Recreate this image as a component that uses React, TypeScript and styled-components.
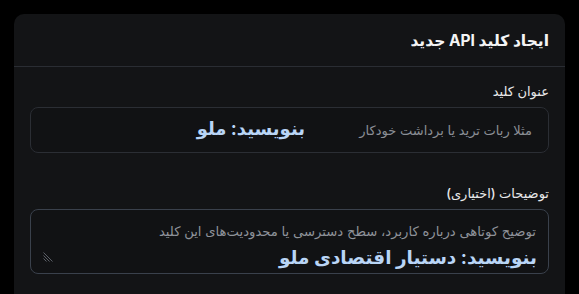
import styled, { createGlobalStyle } from 'styled-components';

const GlobalStyle = createGlobalStyle`
  html, body {
    margin: 0;
    padding: 0;
    background: #000;
    height: 100%;
    overflow: hidden;
  }
  body {
    font-family: Inter, "DejaVu Sans", sans-serif;
  }
`;

const Page = styled.div`
  padding: 14px 14px 0;
  direction: rtl;
`;

const Card = styled.div`
  background: #131416;
  border-radius: 10px;
  height: 290px;
  overflow: hidden;
`;

const Header = styled.div`
  height: 52px;
  display: flex;
  align-items: center;
  padding: 0 16px;
  border-bottom: 1px solid #2a2d33;
`;

const Title = styled.h2`
  margin: 0;
  font-size: 15.5px;
  font-weight: 700;
  color: #f4f4f5;
`;

const Body = styled.div`
  padding: 16px;
  display: flex;
  flex-direction: column;
  gap: 32px;
`;

const Field = styled.div`
  display: flex;
  flex-direction: column;
  gap: 8px;
`;

const Label = styled.label`
  font-size: 13px;
  font-weight: 500;
  color: #e9e9ea;
  line-height: 16px;
`;

const Wrap = styled.div`
  position: relative;
`;

const Input = styled.input`
  box-sizing: border-box;
  width: 100%;
  height: 46px;
  padding: 0 16px;
  background: #111214;
  border: 1px solid #2b2e34;
  border-radius: 8px;
  color: #e9e9ea;
  font: inherit;
  font-size: 13px;
  direction: rtl;
  outline: none;
  &::placeholder {
    color: #8b8f96;
  }
`;

const TextArea = styled.textarea`
  box-sizing: border-box;
  display: block;
  width: 100%;
  height: 65px;
  padding: 11px 12px;
  background: #111214;
  border: 1px solid #3a414c;
  border-radius: 8px;
  color: #e9e9ea;
  font: inherit;
  font-size: 13.2px;
  line-height: 20px;
  direction: rtl;
  outline: none;
  resize: none;
  &::placeholder {
    color: #8f939a;
  }
`;

const Hint = styled.span<{ $size: number; $right: number; $top: number }>`
  position: absolute;
  right: ${(p) => p.$right}px;
  top: ${(p) => p.$top}px;
  font-size: ${(p) => p.$size}px;
  font-weight: 700;
  color: #b9d5f6;
  line-height: 1.2;
  white-space: nowrap;
  pointer-events: none;
`;

const Grip = styled.svg`
  position: absolute;
  left: 13px;
  bottom: 12px;
  width: 10px;
  height: 10px;
`;

function ResizeGrip() {
  return (
    <Grip viewBox="0 0 10 10">
      <g stroke="#5a5e66" strokeWidth="1">
        <line x1="0.5" y1="0.5" x2="9.5" y2="9.5" />
        <line x1="0.5" y1="3.5" x2="6.5" y2="9.5" />
        <line x1="0.5" y1="6.5" x2="3.5" y2="9.5" />
      </g>
    </Grip>
  );
}

export default function App() {
  return (
    <>
      <GlobalStyle />
      <Page>
        <Card>
          <Header>
            <Title>ایجاد کلید API جدید</Title>
          </Header>
          <Body>
            <Field>
              <Label>عنوان کلید</Label>
              <Wrap>
                <Input placeholder="مثلا ربات ترید یا برداشت خودکار" />
                <Hint $size={18} $right={244} $top={11}>بنویسید: ملو</Hint>
              </Wrap>
            </Field>
            <Field>
              <Label>توضیحات (اختیاری)</Label>
              <Wrap>
                <TextArea placeholder="توضیح کوتاهی درباره کاربرد، سطح دسترسی یا محدودیت‌های این کلید" />
                <Hint $size={18.5} $right={12} $top={37}>بنویسید: دستیار اقتصادی ملو</Hint>
                <ResizeGrip />
              </Wrap>
            </Field>
          </Body>
        </Card>
      </Page>
    </>
  );
}
